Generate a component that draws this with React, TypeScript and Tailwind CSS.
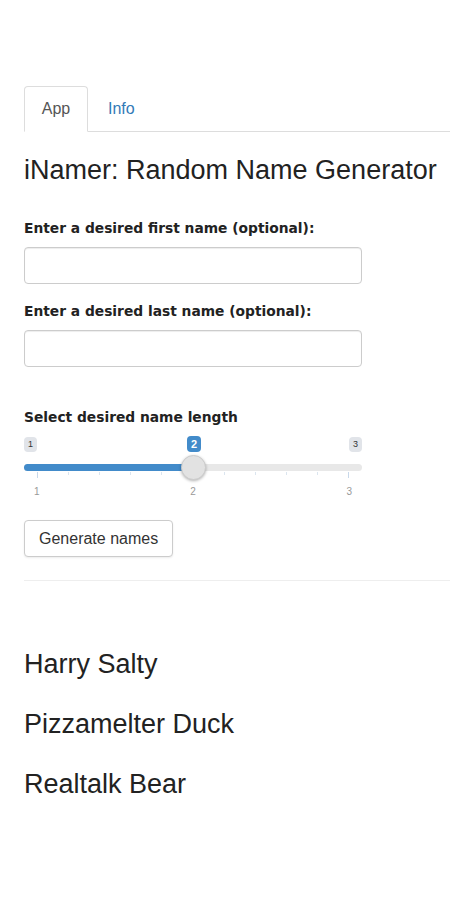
import { useState } from "react";

const names = ["Harry Salty", "Pizzamelter Duck", "Realtalk Bear"];

const ticks = [0, 1, 2, 3, 4, 5, 6, 7, 8, 9, 10];

function Tabs() {
  return (
    <div className="flex border-b border-[#ddd]">
      <div className="-mb-px flex h-[46px] w-[64px] items-center justify-center rounded-t border border-[#ddd] border-b-white bg-white text-[16px] text-[#555]">
        App
      </div>
      <div className="flex h-[45px] items-center px-[20px] text-[16px] text-[#337ab7]">Info</div>
    </div>
  );
}

function FieldLabel({ text }: { text: string }) {
  return (
    <label className="text-[13.8px] leading-[17px] font-bold text-[#222] [font-family:'DejaVu_Sans',sans-serif]">
      {text}
    </label>
  );
}

function TextField({ label }: { label: string }) {
  return (
    <div className="flex flex-col gap-[10px]">
      <FieldLabel text={label} />
      <input className="h-[37px] w-[338px] rounded border border-[#ccc] px-3 text-[16px] shadow-[inset_0_1px_1px_rgba(0,0,0,0.075)] outline-none" />
    </div>
  );
}

function Slider() {
  return (
    <div className="flex w-[338px] flex-col">
      <FieldLabel text="Select desired name length" />
      <div className="relative mt-[11px] flex justify-between">
        <span className="rounded-sm bg-[#e1e4e9] px-[4px] text-[9px] leading-[15px] text-[#333]">1</span>
        <span className="absolute left-[163px] top-[-1px] rounded-sm bg-[#428bca] px-[4px] text-[11px] font-bold leading-[16px] text-white">
          2
        </span>
        <span className="rounded-sm bg-[#e1e4e9] px-[4px] text-[9px] leading-[15px] text-[#333]">3</span>
      </div>
      <div className="relative mt-[12px] h-[7px] rounded-full bg-[#e8e8e8]">
        <div className="h-full w-[170px] rounded-full bg-[#428bca]" />
        <div className="absolute left-[157px] top-[-9px] h-[25px] w-[25px] rounded-full border border-[#ccc] bg-[#e2e2e2] shadow-[0_1px_3px_rgba(0,0,0,0.3)]" />
      </div>
      <div className="mt-[1px] flex items-start justify-between px-[13px]">
        {ticks.map((i) => (
          <div key={i} className={`w-px ${i % 5 === 0 ? "h-[6px] bg-[#c8d8ea]" : "h-[3px] bg-[#dbe5ef]"}`} />
        ))}
      </div>
      <div className="mt-[8px] flex justify-between px-[10px] text-[10px] leading-[12px] text-[#999]">
        <span>1</span>
        <span>2</span>
        <span>3</span>
      </div>
    </div>
  );
}

export default function App() {
  const [generated] = useState(names);
  return (
    <div className="min-h-[900px] bg-white pl-[24px] pt-[86px] text-[#333] [font-family:'Liberation_Sans',Arial,sans-serif]">
      <Tabs />
      <h1 className="mt-[22px] text-[27px] leading-[32px] text-[#222]">iNamer: Random Name Generator</h1>
      <div className="mt-[34px] flex flex-col gap-[19px]">
        <TextField label="Enter a desired first name (optional):" />
        <TextField label="Enter a desired last name (optional):" />
      </div>
      <div className="mt-[42px]">
        <Slider />
      </div>
      <button className="mt-[22px] h-[37px] rounded border border-[#ccc] bg-white px-[14px] text-[16px] text-[#333] shadow-[0_1px_2px_rgba(0,0,0,0.08)]">
        Generate names
      </button>
      <hr className="mt-[23px] border-[#eee]" />
      <div className="mt-[67px] flex flex-col gap-[28px]">
        {generated.map((n) => (
          <p key={n} className="text-[27px] leading-[32px] text-[#222]">
            {n}
          </p>
        ))}
      </div>
    </div>
  );
}
